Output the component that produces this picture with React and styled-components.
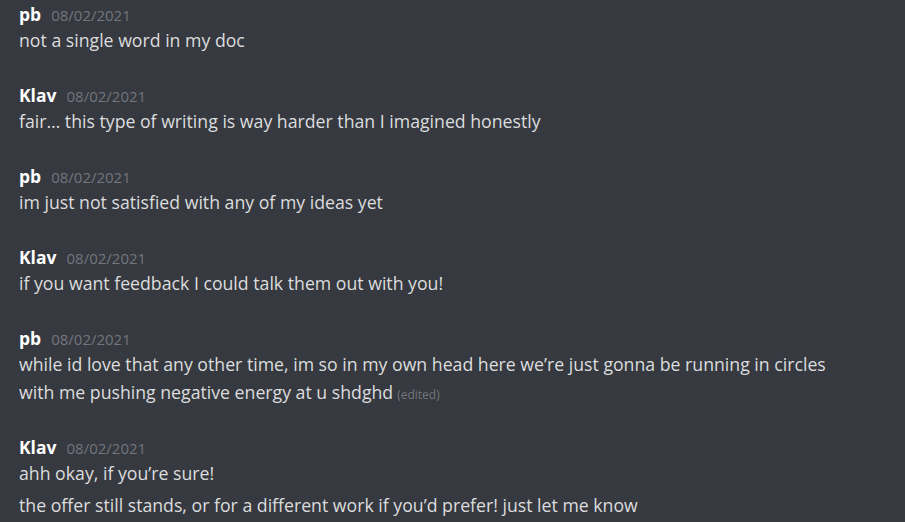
import React from 'react';
import styled, { createGlobalStyle } from 'styled-components';

const GlobalStyle = createGlobalStyle`
  html, body {
    margin: 0;
    padding: 0;
    background: #36393f;
  }
  body {
    font-family: "Open Sans", "Noto Sans", sans-serif;
  }
`;

const Chat = styled.div`
  width: 905px;
  height: 522px;
  overflow: hidden;
  background: #36393f;
  padding: 2px 0 0 19px;
  box-sizing: border-box;
`;

const Group = styled.div`
  margin-bottom: 29px;
`;

const Header = styled.div`
  display: flex;
  align-items: baseline;
  height: 24px;
  line-height: 24px;
`;

const Name = styled.span`
  color: #ffffff;
  font-size: 17.5px;
  font-weight: 700;
  margin-right: 10px;
`;

const Stamp = styled.span`
  color: #72767d;
  font-size: 15px;
`;

const Line = styled.div`
  color: #dcddde;
  font-size: 17.7px;
  line-height: 28px;
  height: 28px;
  white-space: nowrap;
  margin-top: ${(p) => (p.$split ? '4px' : '0')};
`;

const Edited = styled.span`
  color: #72767d;
  font-size: 12px;
  line-height: 1;
  margin-left: 4px;
`;

const messages = [
  { name: 'pb', lines: [['not a single word in my doc']] },
  { name: 'Klav', lines: [['fair… this type of writing is way harder than I imagined honestly']] },
  { name: 'pb', lines: [['im just not satisfied with any of my ideas yet']] },
  { name: 'Klav', lines: [['if you want feedback I could talk them out with you!']] },
  {
    name: 'pb',
    lines: [[
      'while id love that any other time, im so in my own head here we\u2019re just gonna be running in circles',
      'with me pushing negative energy at u shdghd',
    ]],
    edited: true,
  },
  {
    name: 'Klav',
    lines: [['ahh okay, if you\u2019re sure!'], ['the offer still stands, or for a different work if you\u2019d prefer! just let me know']],
  },
];

export default function App() {
  return (
    <>
      <GlobalStyle />
      <Chat>
        {messages.map((m, i) => (
          <Group key={i}>
            <Header>
              <Name>{m.name}</Name>
              <Stamp>08/02/2021</Stamp>
            </Header>
            {m.lines.map((msg, j) =>
              msg.map((text, k) => (
                <Line key={`${j}-${k}`} $split={j > 0 && k === 0}>
                  {text}
                  {m.edited && k === msg.length - 1 && <Edited>(edited)</Edited>}
                </Line>
              ))
            )}
          </Group>
        ))}
      </Chat>
    </>
  );
}
